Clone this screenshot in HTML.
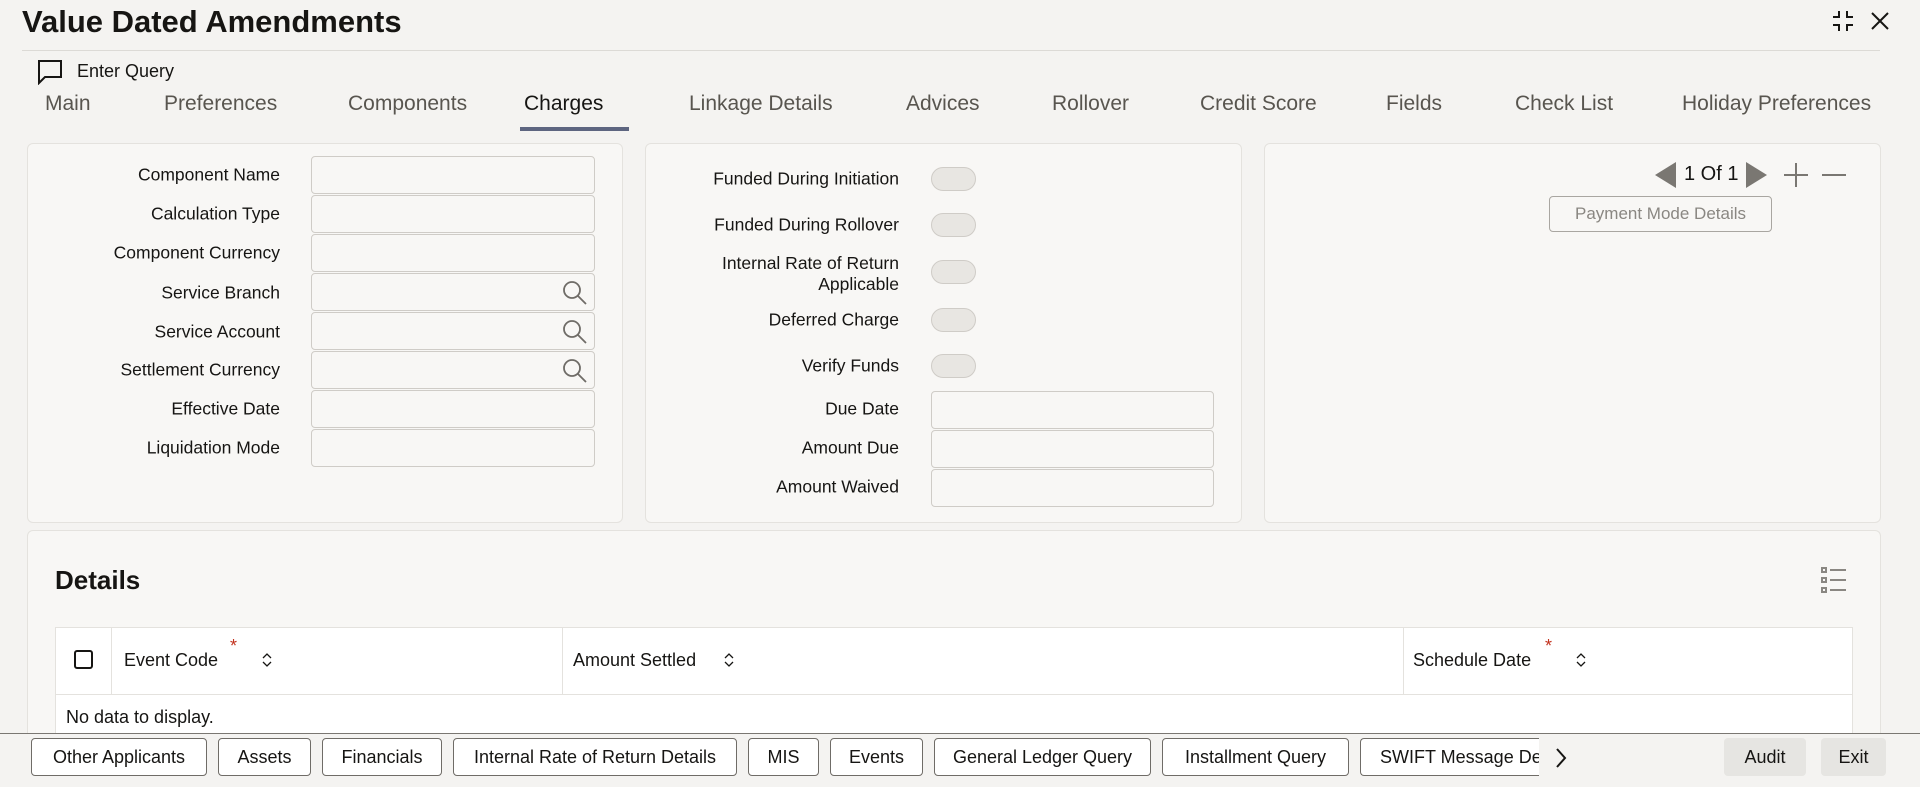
<!DOCTYPE html>
<html><head><meta charset="utf-8"><style>
*{box-sizing:border-box;margin:0;padding:0}
html{width:1920px;height:787px;overflow:hidden}
body{width:1920px;height:787px;overflow:hidden;background:#f4f3f1;font-family:"Liberation Sans",sans-serif;color:#161513;position:relative}
.a{position:absolute;white-space:nowrap}
.panel{position:absolute;background:#f8f7f5;border:1px solid #e4e2de;border-radius:6px}
.lbl{position:absolute;font-size:17.5px;text-align:right;white-space:nowrap;transform:translateY(-50%)}
.inp{position:absolute;background:#f8f7f5;border:1px solid #cfccc7;border-radius:4px;height:38px}
.tg{position:absolute;width:45px;height:24px;border:1px solid #cfccc7;background:#e8e6e2;border-radius:12px}
.tab{position:absolute;top:92px;font-size:21px;color:#58554f}
.btn{position:absolute;top:738px;height:38px;border:1px solid #6f6c67;border-radius:4px;background:#fff;font-size:18px;display:flex;align-items:center;justify-content:center;white-space:nowrap;overflow:hidden}
</style></head><body>
<div class="a" style="left:22px;top:4px;font-size:31px;font-weight:bold">Value Dated Amendments</div>
<svg class="a" style="left:1830px;top:8px" width="26" height="26" viewBox="0 0 26 26" fill="none" stroke="#161513" stroke-width="2"><path d="M9 3v6H3M17 3v6h6M9 23v-6H3M17 23v-6h6"/></svg>
<svg class="a" style="left:1869px;top:10px" width="22" height="22" viewBox="0 0 22 22" stroke="#161513" stroke-width="2"><path d="M3 3l16 16M19 3L3 19"/></svg>
<div class="a" style="left:22px;top:50px;width:1858px;height:1px;background:#dcdad6"></div>
<svg class="a" style="left:37px;top:59px" width="26" height="26" viewBox="0 0 26 26" fill="none" stroke="#161513" stroke-width="2"><path d="M2 2h22v16H8l-6 6z"/></svg>
<div class="a" style="left:77px;top:61px;font-size:18px">Enter Query</div>
<div class="tab" style="left:45px">Main</div>
<div class="tab" style="left:164px">Preferences</div>
<div class="tab" style="left:348px">Components</div>
<div class="tab" style="left:524px;color:#161513">Charges</div>
<div class="tab" style="left:689px">Linkage Details</div>
<div class="tab" style="left:906px">Advices</div>
<div class="tab" style="left:1052px">Rollover</div>
<div class="tab" style="left:1200px">Credit Score</div>
<div class="tab" style="left:1386px">Fields</div>
<div class="tab" style="left:1515px">Check List</div>
<div class="tab" style="left:1682px">Holiday Preferences</div>
<div class="a" style="left:520px;top:127px;width:109px;height:4px;background:#5d6580"></div>

<div class="panel" style="left:27px;top:143px;width:596px;height:380px"></div>
<div class="panel" style="left:645px;top:143px;width:597px;height:380px"></div>
<div class="panel" style="left:1264px;top:143px;width:617px;height:380px"></div>

<div class="lbl" style="right:1640px;top:175px">Component Name</div>
<div class="lbl" style="right:1640px;top:214px">Calculation Type</div>
<div class="lbl" style="right:1640px;top:253px">Component Currency</div>
<div class="lbl" style="right:1640px;top:293px">Service Branch</div>
<div class="lbl" style="right:1640px;top:332px">Service Account</div>
<div class="lbl" style="right:1640px;top:370px">Settlement Currency</div>
<div class="lbl" style="right:1640px;top:409px">Effective Date</div>
<div class="lbl" style="right:1640px;top:448px">Liquidation Mode</div>
<div class="inp" style="left:311px;top:156px;width:284px"></div>
<div class="inp" style="left:311px;top:195px;width:284px"></div>
<div class="inp" style="left:311px;top:234px;width:284px"></div>
<div class="inp" style="left:311px;top:273px;width:284px"></div>
<div class="inp" style="left:311px;top:312px;width:284px"></div>
<div class="inp" style="left:311px;top:351px;width:284px"></div>
<div class="inp" style="left:311px;top:390px;width:284px"></div>
<div class="inp" style="left:311px;top:429px;width:284px"></div>
<svg class="a" style="left:561px;top:279px" width="28" height="28" viewBox="0 0 28 28" fill="none" stroke="#6f6c67" stroke-width="1.8"><circle cx="11" cy="11" r="8"/><path d="M17 17l8 8"/></svg>
<svg class="a" style="left:561px;top:318px" width="28" height="28" viewBox="0 0 28 28" fill="none" stroke="#6f6c67" stroke-width="1.8"><circle cx="11" cy="11" r="8"/><path d="M17 17l8 8"/></svg>
<svg class="a" style="left:561px;top:357px" width="28" height="28" viewBox="0 0 28 28" fill="none" stroke="#6f6c67" stroke-width="1.8"><circle cx="11" cy="11" r="8"/><path d="M17 17l8 8"/></svg>

<div class="lbl" style="right:1021px;top:179px">Funded During Initiation</div>
<div class="lbl" style="right:1021px;top:225px">Funded During Rollover</div>
<div class="lbl" style="right:1021px;top:274px;line-height:21px">Internal Rate of Return<br>Applicable</div>
<div class="lbl" style="right:1021px;top:320px">Deferred Charge</div>
<div class="lbl" style="right:1021px;top:366px">Verify Funds</div>
<div class="lbl" style="right:1021px;top:409px">Due Date</div>
<div class="lbl" style="right:1021px;top:448px">Amount Due</div>
<div class="lbl" style="right:1021px;top:487px">Amount Waived</div>
<div class="tg" style="left:931px;top:167px"></div>
<div class="tg" style="left:931px;top:213px"></div>
<div class="tg" style="left:931px;top:260px"></div>
<div class="tg" style="left:931px;top:308px"></div>
<div class="tg" style="left:931px;top:354px"></div>
<div class="inp" style="left:931px;top:391px;width:283px"></div>
<div class="inp" style="left:931px;top:430px;width:283px"></div>
<div class="inp" style="left:931px;top:469px;width:283px"></div>

<svg class="a" style="left:1654px;top:161px" width="24" height="28"><path d="M22 1v26L1 14z" fill="#7a7772"/></svg>
<div class="a" style="left:1684px;top:163px;font-size:20px">1 Of 1</div>
<svg class="a" style="left:1744px;top:161px" width="24" height="28"><path d="M2 1v26l21-13z" fill="#7a7772"/></svg>
<svg class="a" style="left:1782px;top:161px" width="28" height="28" stroke="#7a7772" stroke-width="2"><path d="M14 2v24M2 14h24"/></svg>
<svg class="a" style="left:1820px;top:161px" width="28" height="28" stroke="#7a7772" stroke-width="2"><path d="M2 14h24"/></svg>
<div class="a" style="left:1549px;top:196px;width:223px;height:36px;border:1px solid #a9a6a1;border-radius:4px;font-size:17px;color:#8a8782;display:flex;align-items:center;justify-content:center">Payment Mode Details</div>

<div class="panel" style="left:27px;top:530px;width:1854px;height:257px;border-bottom:none;border-radius:6px 6px 0 0"></div>
<div class="a" style="left:55px;top:565px;font-size:26px;font-weight:bold">Details</div>
<svg class="a" style="left:1820px;top:566px" width="28" height="28" fill="none" stroke="#8a8782" stroke-width="2"><rect x="2" y="2" width="4" height="4"/><rect x="2" y="12" width="4" height="4"/><rect x="2" y="22" width="4" height="4"/><path d="M10 4h16M10 14h16M10 24h16"/></svg>
<div class="a" style="left:55px;top:627px;width:1798px;height:110px;background:#fff;border:1px solid #e4e2de"></div>
<div class="a" style="left:55px;top:694px;width:1798px;height:1px;background:#e4e2de"></div>
<div class="a" style="left:111px;top:627px;width:1px;height:67px;background:#e4e2de"></div>
<div class="a" style="left:562px;top:627px;width:1px;height:67px;background:#e4e2de"></div>
<div class="a" style="left:1403px;top:627px;width:1px;height:67px;background:#e4e2de"></div>
<div class="a" style="left:74px;top:650px;width:19px;height:19px;border:2px solid #161513;border-radius:3px"></div>
<div class="a" style="left:124px;top:650px;font-size:18px">Event Code</div>
<div class="a" style="left:230px;top:636px;font-size:18px;color:#c2321e">*</div>
<div class="a" style="left:573px;top:650px;font-size:18px">Amount Settled</div>
<div class="a" style="left:1413px;top:650px;font-size:18px">Schedule Date</div>
<div class="a" style="left:1545px;top:636px;font-size:18px;color:#c2321e">*</div>
<svg class="a" style="left:261px;top:651px" width="12" height="18" fill="none" stroke="#161513" stroke-width="1.3"><path d="M2 7l4-4 4 4M2 11l4 4 4-4"/></svg>
<svg class="a" style="left:723px;top:651px" width="12" height="18" fill="none" stroke="#161513" stroke-width="1.3"><path d="M2 7l4-4 4 4M2 11l4 4 4-4"/></svg>
<svg class="a" style="left:1575px;top:651px" width="12" height="18" fill="none" stroke="#161513" stroke-width="1.3"><path d="M2 7l4-4 4 4M2 11l4 4 4-4"/></svg>
<div class="a" style="left:66px;top:707px;font-size:18px">No data to display.</div>

<div class="a" style="left:0;top:733px;width:1920px;height:54px;background:#f4f3f1;border-top:1px solid #7a7772"></div>
<div class="btn" style="left:31px;width:176px">Other Applicants</div>
<div class="btn" style="left:218px;width:93px">Assets</div>
<div class="btn" style="left:322px;width:120px">Financials</div>
<div class="btn" style="left:453px;width:284px">Internal Rate of Return Details</div>
<div class="btn" style="left:748px;width:71px">MIS</div>
<div class="btn" style="left:830px;width:93px">Events</div>
<div class="btn" style="left:934px;width:217px">General Ledger Query</div>
<div class="btn" style="left:1162px;width:187px">Installment Query</div>
<div class="btn" style="left:1360px;width:200px;justify-content:flex-start;padding-left:19px;border-right:none">SWIFT Message Details</div>
<div class="a" style="left:1539px;top:736px;width:40px;height:44px;background:#f4f3f1"></div>
<svg class="a" style="left:1554px;top:747px" width="14" height="22" fill="none" stroke="#161513" stroke-width="2"><path d="M3 2l8 9-8 9"/></svg>
<div class="a" style="left:1724px;top:738px;width:82px;height:38px;background:#e6e5e2;border-radius:4px;font-size:18px;display:flex;align-items:center;justify-content:center">Audit</div>
<div class="a" style="left:1821px;top:738px;width:65px;height:38px;background:#e6e5e2;border-radius:4px;font-size:18px;display:flex;align-items:center;justify-content:center">Exit</div>
</body></html>
